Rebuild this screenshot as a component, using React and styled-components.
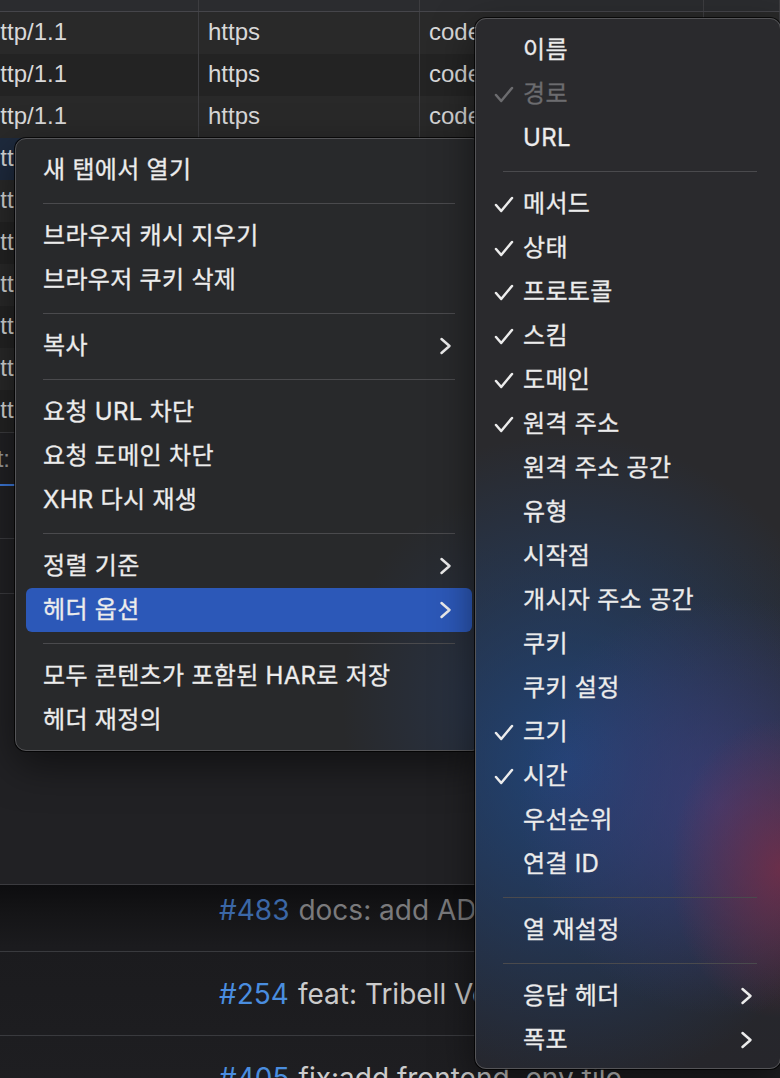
import styled, { createGlobalStyle } from "styled-components";

const GlobalStyle = createGlobalStyle`
  html, body {
    margin: 0;
    padding: 0;
  }
  body {
    background: #202124;
    font-family: "Inter", "Noto Sans CJK KR", sans-serif;
    -webkit-font-smoothing: antialiased;
  }
`;

const Screen = styled.div`
  position: relative;
  width: 780px;
  height: 1078px;
  overflow: hidden;
  background: #202124;
  display: flex;
  flex-direction: column;
`;

/* ---------- devtools network panel behind the menus ---------- */

const DevTools = styled.section`
  height: 885px;
  flex: none;
  box-sizing: border-box;
  display: flex;
  flex-direction: column;
  background: #212124;
  border-bottom: 1px solid #3b3b3f;
  overflow: hidden;
`;

const Table = styled.div`
  margin-left: -22px;
  display: flex;
  flex-direction: column;
  border-bottom: 1px solid #3c3c3f;
`;

const Row = styled.div`
  display: grid;
  grid-template-columns: 221px 221px 284px 1fr;
  height: ${(p) => (p.$head ? "11px" : "42px")};
  background: ${(p) =>
    p.$head ? "#2b2c2f" : p.$selected ? "#1e2a3d" : p.$odd ? "#232323" : "#292929"};
  border-bottom: ${(p) => (p.$head ? "1px solid #45454a" : "none")};
`;

const Cell = styled.div`
  border-right: 1px solid #3d3d40;
  padding: 0 9px;
  display: flex;
  align-items: center;
  padding-bottom: 2px;
  font-family: "Liberation Sans", Arial, sans-serif;
  font-size: 24px;
  color: #d8d8d8;
  white-space: nowrap;
  overflow: hidden;
`;

const Toolbar = styled.div`
  height: ${(p) => p.$h}px;
  flex: none;
  display: flex;
  align-items: center;
  border-bottom: ${(p) => (p.$line ? "1px solid #3b3b3f" : "none")};
`;

const CutLabel = styled.div`
  width: 10px;
  display: flex;
  justify-content: flex-end;
  overflow: hidden;
  white-space: nowrap;
  font-family: "Liberation Sans", Arial, sans-serif;
  font-size: 24px;
  color: #9c9c9c;
`;

const Tab = styled.div`
  width: 140px;
  height: 2px;
  background: #3c78d8;
`;

/* ---------- pull request list of the window below ---------- */

const Feed = styled.section`
  flex: 1;
  overflow: hidden;
  background: linear-gradient(#0d0d0f 0px, #151517 30px, #1b1b1e 62px, #1e1e21 100%);
`;

const FeedRow = styled.div`
  height: 83px;
  border-bottom: 1px solid #393a3e;
  display: flex;
  align-items: center;
  padding-left: 219px;
  font-family: "Inter", sans-serif;
  font-size: 28px;
  white-space: nowrap;
  &:first-child {
    margin-top: -17px;
  }
`;

const Num = styled.span`
  color: ${(p) => (p.$dim ? "#3b67a6" : "#4a8ddf")};
  margin-right: 9px;
`;

const Title = styled.span`
  color: ${(p) => (p.$dim ? "#7a7a7c" : "#cbcbcb")};
`;

/* ---------- context menus ---------- */

const Menu = styled.div`
  position: absolute;
  box-sizing: border-box;
  border: 1px solid #545457;
  border-radius: 11px;
  box-shadow: 0 0 0 1px rgba(0, 0, 0, 0.75), 0 14px 40px rgba(0, 0, 0, 0.5);
  display: flex;
  flex-direction: column;
`;

const ContextMenu = styled(Menu)`
  left: 15px;
  top: 138px;
  width: 468px;
  padding: 9px 10px 8px;
  background:
    radial-gradient(ellipse 140px 200px at 100% 92%, rgba(40, 70, 125, 0.3), transparent),
    #28292b;
`;

const ColumnMenu = styled(Menu)`
  left: 475px;
  top: 18px;
  width: 306px;
  padding: 9px 10px 6px;
  z-index: 2;
  background:
    radial-gradient(ellipse 110px 150px at 100% 81%, rgba(125, 45, 70, 0.75), transparent),
    radial-gradient(ellipse 200px 210px at 80% 75%, rgba(68, 62, 128, 0.65), transparent),
    radial-gradient(ellipse 300px 330px at 30% 71%, rgba(32, 72, 130, 0.85), transparent),
    linear-gradient(#2a2a2d 0%, #2a2a2d 50%, #26282f 80%, #26262b 100%);
`;

const Item = styled.div`
  height: 44px;
  flex: none;
  display: flex;
  align-items: center;
  padding: 0 ${(p) => p.$right}px 0 ${(p) => p.$left}px;
  border-radius: 6px;
  font-size: 24px;
  letter-spacing: 0.3px;
  line-height: 44px;
  white-space: nowrap;
  -webkit-text-stroke: 0.3px currentColor;
  color: ${(p) => (p.$disabled ? "#6c6c6f" : "#ececec")};
  background: ${(p) => (p.$active ? "#2c58b8" : "transparent")};
`;

const Label = styled.span`
  flex: 1;
`;

const CheckSlot = styled.span`
  width: 29px;
  flex: none;
  display: flex;
  align-items: center;
`;

const Separator = styled.div`
  height: 22px;
  flex: none;
  display: flex;
  align-items: center;
  margin: 0 ${(p) => p.$right}px 0 ${(p) => p.$left}px;
  &::after {
    content: "";
    flex: 1;
    height: 1px;
    background: #4a4a4d;
  }
`;

const Check = () => (
  <svg width="20" height="17" viewBox="0 0 20 17">
    <path
      d="M2 9 L7.2 15 L18 2"
      fill="none"
      stroke="currentColor"
      strokeWidth="2.5"
      strokeLinecap="round"
      strokeLinejoin="round"
    />
  </svg>
);

const Chevron = () => (
  <svg width="13" height="18" viewBox="0 0 13 18">
    <path
      d="M2.5 2 L10.5 9 L2.5 16"
      fill="none"
      stroke="currentColor"
      strokeWidth="2.5"
      strokeLinecap="round"
      strokeLinejoin="round"
    />
  </svg>
);

const contextSections = [
  [{ label: "새 탭에서 열기" }],
  [{ label: "브라우저 캐시 지우기" }, { label: "브라우저 쿠키 삭제" }],
  [{ label: "복사", sub: true }],
  [{ label: "요청 URL 차단" }, { label: "요청 도메인 차단" }, { label: "XHR 다시 재생" }],
  [{ label: "정렬 기준", sub: true }, { label: "헤더 옵션", sub: true, active: true }],
  [{ label: "모두 콘텐츠가 포함된 HAR로 저장" }, { label: "헤더 재정의" }],
];

const columnSections = [
  [{ label: "이름" }, { label: "경로", checked: true, disabled: true }, { label: "URL" }],
  [
    { label: "메서드", checked: true },
    { label: "상태", checked: true },
    { label: "프로토콜", checked: true },
    { label: "스킴", checked: true },
    { label: "도메인", checked: true },
    { label: "원격 주소", checked: true },
    { label: "원격 주소 공간" },
    { label: "유형" },
    { label: "시작점" },
    { label: "개시자 주소 공간" },
    { label: "쿠키" },
    { label: "쿠키 설정" },
    { label: "크기", checked: true },
    { label: "시간", checked: true },
    { label: "우선순위" },
    { label: "연결 ID" },
  ],
  [{ label: "열 재설정" }],
  [{ label: "응답 헤더", sub: true }, { label: "폭포", sub: true }],
];

const rows = Array.from({ length: 10 }, (_, i) => i);

const feed = [
  { num: "#483", title: "docs: add ADR for deployment", dim: true },
  { num: "#254", title: "feat: Tribell Version 2" },
  { num: "#405", title: "fix:add frontend .env file" },
];

function MenuSections({ sections, withChecks, left, right, sepLeft, sepRight }) {
  return sections.map((section, si) => (
    <div key={si} style={{ display: "contents" }}>
      {si > 0 && <Separator $left={sepLeft} $right={sepRight} />}
      {section.map((item) => (
        <Item
          key={item.label}
          $left={left}
          $right={right}
          $active={item.active}
          $disabled={item.disabled}
        >
          {withChecks && <CheckSlot>{item.checked && <Check />}</CheckSlot>}
          <Label>{item.label}</Label>
          {item.sub && <Chevron />}
        </Item>
      ))}
    </div>
  ));
}

export default function App() {
  return (
    <>
      <GlobalStyle />
      <Screen>
        <DevTools>
          <Table>
            <Row $head>
              <Cell />
              <Cell />
              <Cell />
              <Cell />
            </Row>
            {rows.map((i) => (
              <Row key={i} $odd={i % 2 === 1} $selected={i === 3}>
                <Cell>http/1.1</Cell>
                <Cell>https</Cell>
                <Cell>codeload.github.com</Cell>
                <Cell>140.82.112.10</Cell>
              </Row>
            ))}
          </Table>
          <Toolbar $h={51}>
            <CutLabel>Text:</CutLabel>
          </Toolbar>
          <Tab />
          <Toolbar $h={52} $line />
          <Toolbar $h={54} $line />
        </DevTools>

        <Feed>
          {feed.map((f) => (
            <FeedRow key={f.num}>
              <Num $dim={f.dim}>{f.num}</Num>
              <Title $dim={f.dim}>{f.title}</Title>
            </FeedRow>
          ))}
        </Feed>

        <ContextMenu>
          <MenuSections sections={contextSections} left={17} right={20} sepLeft={17} sepRight={17} />
        </ContextMenu>

        <ColumnMenu>
          <MenuSections
            sections={columnSections}
            withChecks
            left={8}
            right={17}
            sepLeft={17}
            sepRight={13}
          />
        </ColumnMenu>
      </Screen>
    </>
  );
}
